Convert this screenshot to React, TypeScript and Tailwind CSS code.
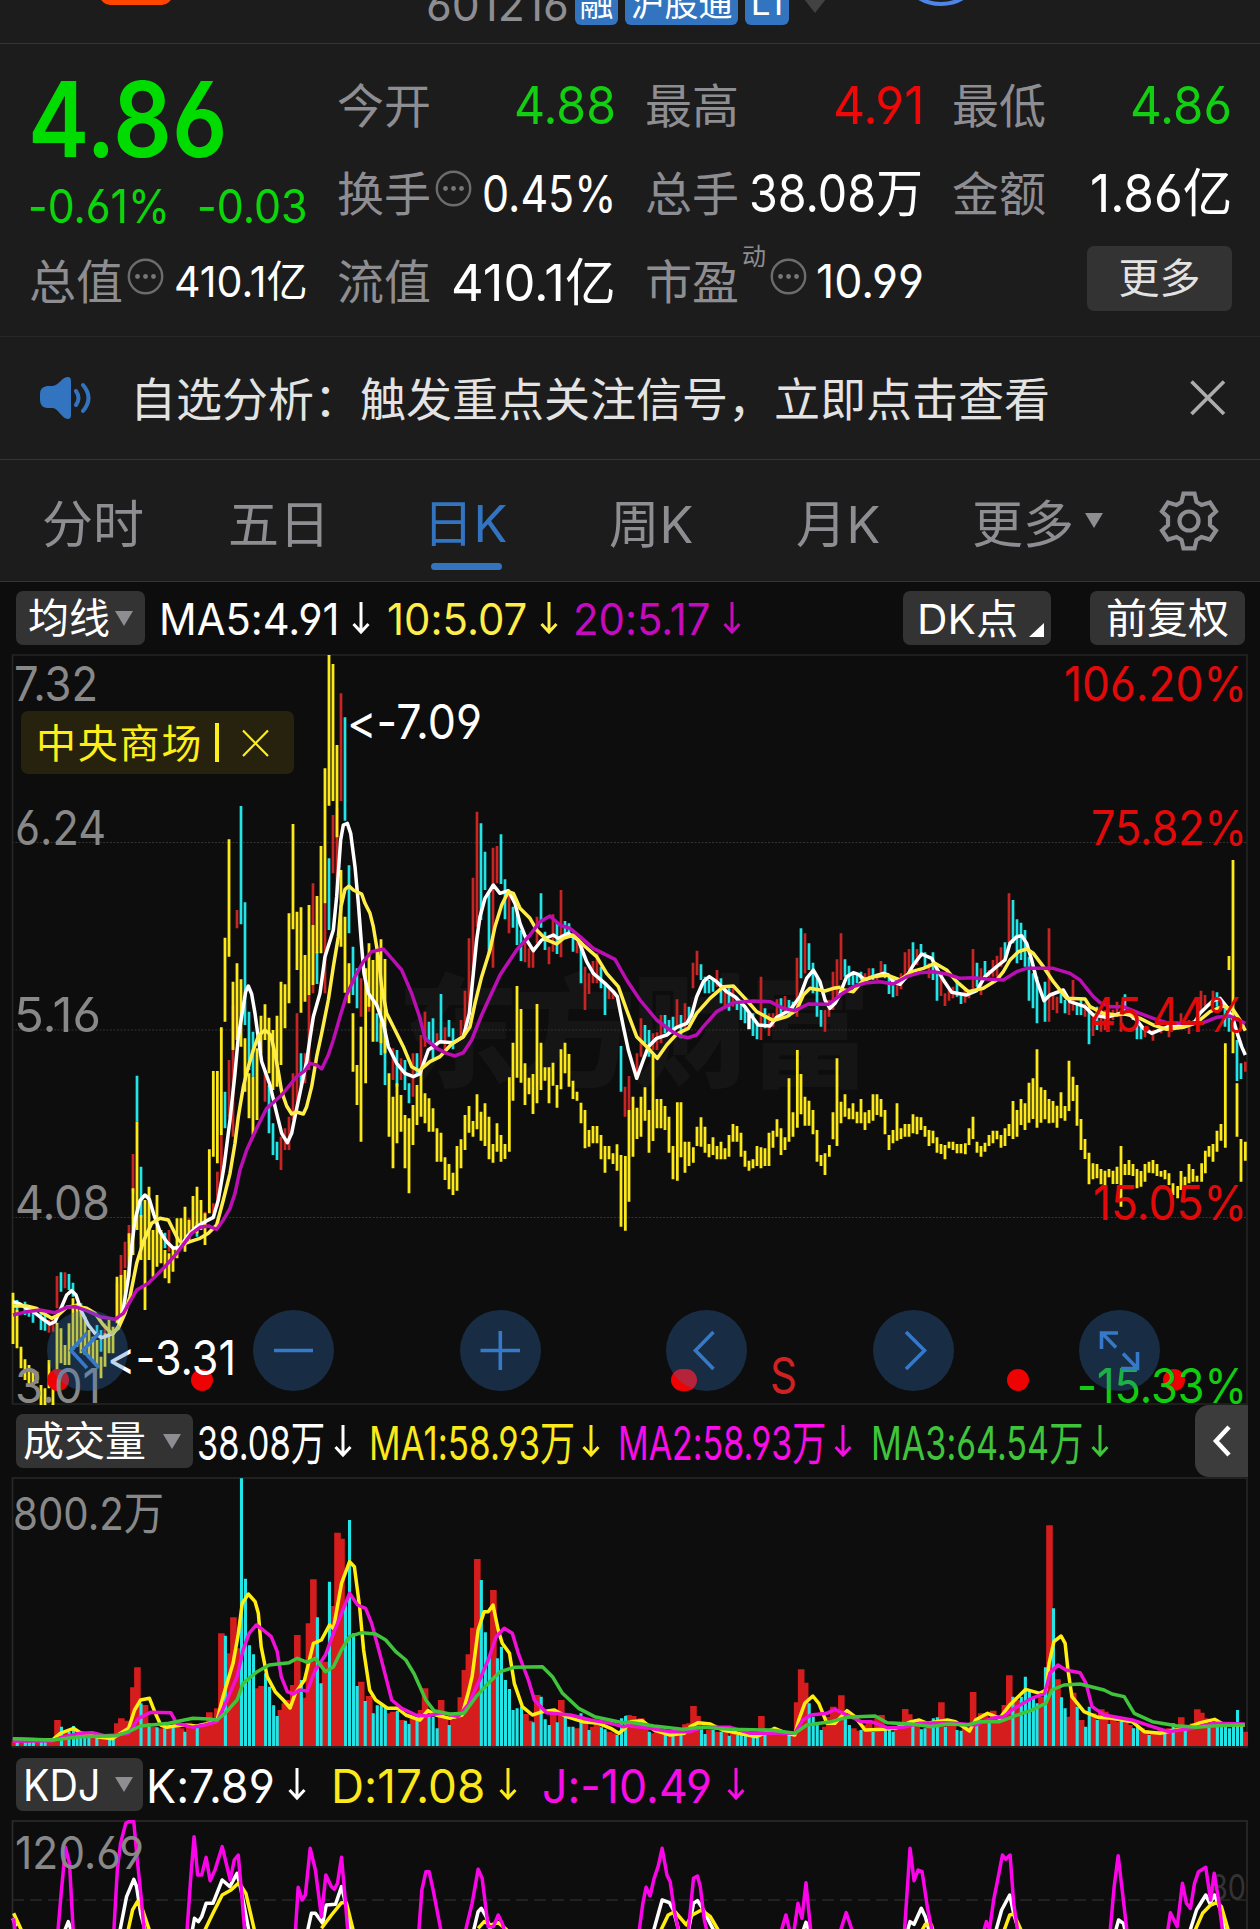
import { ReactNode, useLayoutEffect, useRef, useState } from "react";

const FONT = "font-['Inter','Noto_Sans_CJK_SC',sans-serif] [font-feature-settings:'cv03','cv04','calt'_0]";

/** Text squeezed or stretched horizontally to an exact width. */
function Fit({ w, className = "", children }: { w: number; className?: string; children: ReactNode }) {
  const ref = useRef<HTMLSpanElement>(null);
  const [k, setK] = useState(1);
  useLayoutEffect(() => {
    if (ref.current) setK(w / ref.current.offsetWidth);
  }, [w]);
  return (
    <span className={"inline-flex shrink-0 leading-none " + className} style={{ width: w }}>
      <span ref={ref} className="inline-block shrink-0 origin-left whitespace-nowrap" style={{ transform: `translateY(0.03em) scaleX(${k})` }}>
        {children}
      </span>
    </span>
  );
}

const Dots = () => (
  <svg className="shrink-0" width="37" height="37" viewBox="0 0 37 37">
    <circle cx="18.5" cy="18.5" r="16.7" fill="none" stroke="#6c6c6c" strokeWidth="2.4" />
    <g fill="#77777a">
      <circle cx="10.5" cy="18.5" r="2.4" />
      <circle cx="18.5" cy="18.5" r="2.4" />
      <circle cx="26.5" cy="18.5" r="2.4" />
    </g>
  </svg>
);

const Down = ({ className = "" }: { className?: string }) => (
  <svg className={"shrink-0 " + className} width="18" height="34" viewBox="0 0 18 34" fill="none" stroke="currentColor" strokeWidth="3">
    <path d="M9 1V30M1.5 23L9 31L16.5 23" />
  </svg>
);

const Tri = ({ className = "" }: { className?: string }) => (
  <svg className={"shrink-0 " + className} width="18" height="15" viewBox="0 0 18 15">
    <path d="M0 0H18L9 15Z" fill="#8e8d92" />
  </svg>
);

type Mark = string;
/** "x:top-bottom" entries to vertical strokes. */
const bars = (s: Mark) =>
  s
    .split(",")
    .map((b) => {
      const m = b.match(/^(-?\d+):(-?\d+)-(-?\d+)$/);
      return m ? `M${m[1]} ${m[2]}V${m[3]}` : "";
    })
    .join("");
/** "x:top" entries to columns standing on the volume baseline. */
const cols = (s: string) =>
  s
    .split(",")
    .map((b) => {
      const [x, t] = b.split(":");
      return `M${x} ${t}V828`;
    })
    .join("");
const line = (s: string) =>
  s
    .split("M")
    .filter((p) => p.trim())
    .map((p) => "M" + p.trim().replace(/ /g, "L"))
    .join("");

const RED = "#c92424";
const CYAN = "#22e5e8";
const YEL = "#fbe91c";

const P = [
  {
    t: "translate(0 640) scale(.33333)",
    y: "664:1162-1485,675:893-1145,687:598-950,699:1025-1230,711:970-1200,723:1018-1220,735:1195-1355,747:1300-1435,759:1310-1485,771:1225-1440,783:1127-1240,795:1093-1200,807:1133-1300,819:1170-1350,831:1127-1340,843:1025-1275,855:1033-1165,867:820-1090,879:552-868,891:815-990,903:802-1118,915:945-1085,927:795-1065,939:855-1035,951:768-940,963:618-940,975:385-790,987:45-497,999:72-483,1011:315-592,1023:690-920,1035:830-1058,1047:970-1090,1059:1120-1295,1071:1275-1395,1083:1160-1505,1097:985-1330,1107:910-1100,1119:960-1205,1131:925-1100,1143:898-1210,1155:957-1240,1167:1300-1490,1179:1370-1585,1191:1330-1510,1203:1365-1475,1215:1425-1585,1227:1435-1660,1239:1395-1515,1251:1335-1455",
    r: "699:1095-1490,711:810-865,687:1260-1430,664:1485-1610,652:1595-1700,640:1690-1720,795:1290-1385,843:1490-1590,855:1465-1530,867:1430-1530,879:1300-1440,891:1120-1400,915:1240-1330,927:1065-1290,939:730-1060,975:790-1060,999:525-700,1011:505-760,1023:160-483,1083:1015-1130,1107:1060-1115,1179:1225-1320,1203:1255-1320,1239:1240-1370",
    c: "723:498-853,735:787-1155,747:1115-1290,759:1175-1310,675:1355-1465,807:1335-1480,819:1450-1545,831:1505-1560,903:1240-1340,951:935-1032,987:655-870,1035:232-542,1047:676-880,1059:920-1065,1071:985-1105,1131:1120-1205,1143:1150-1245,1155:1165-1335,1191:1230-1340,1215:1260-1350,1227:1330-1390,1251:1240-1300",
    a: "733,1080 737,1055 745,1038 755,1062 765,1120 773,1180 785,1265 810,1335 830,1420 845,1480 862,1508 875,1480 885,1430 905,1335 920,1265 930,1195 940,1130 960,1060 975,950 1000,870 1010,770 1022,600 1030,555 1042,550 1052,580 1065,680 1075,790 1085,920 1092,1000 1105,1060 1130,1095 1150,1150 1165,1220 1190,1270 1215,1300 1240,1310 1262,1300",
    b: "985,1080 1000,980 1015,890 1023,800 1035,748 1047,738 1060,750 1085,762 1095,790 1110,820 1120,860 1135,950 1145,1040 1160,1120 1185,1170 1210,1220 1235,1280 1262,1295",
    d: "1000,1200 1020,1130 1040,1065 1065,1010 1090,965 1115,935 1150,927 1175,955 1205,990 1235,1060 1262,1140",
  },
  {
    t: "translate(0 1000) scale(.33333)",
    y: "39:878-1032,51:930-1045,63:1040-1105,75:1078-1140,87:1095-1155,99:1110-1160,111:1115-1150,123:1155-1215,135:1165-1215,147:1080-1165,159:1165-1215,171:968-1135,183:985-1090,195:1035-1095,207:970-1095,219:895-1050,231:910-1040,243:930-1060,255:950-1065,267:990-1075,279:1010-1085,291:1020-1100,303:1070-1135,315:1000-1100,327:960-1060,339:980-1060,351:830-970,363:825-950,375:810-905,387:700-830,399:565-765,411:365-690,423:645-780,435:600-930,447:560-780,459:690-830,471:585-800,483:690-790,495:750-835,507:760-850,519:740-815,531:655-775,543:655-735,555:620-755,567:660-720,579:588-690,591:560-700,603:600-690,615:640-735,628:448-640,640:213-470,652:213-490",
    r: "171:828-925,195:817-865,147:960-998,159:960-995,351:850-960,363:765-830,375:725-805,387:675-730,399:462-580,507:690-755,567:655-700,615:635-680,315:970-1010",
    c: "183:817-875,207:822-870,219:848-890,51:900-935,75:905-945,87:915-950,99:930-968,123:935-990,135:945-992,291:975-1010,303:990-1055,411:227-365,423:500-650,495:698-745,591:665-710,243:910-950",
    a: "39,905 60,912 80,925 100,935 130,958 150,972 165,965 183,925 200,885 215,872 228,885 245,935 265,975 285,1000 305,1013 320,1008 340,1000 355,980 370,925 385,835 395,740 405,660 420,602 435,585 448,598 462,645 480,695 500,725 520,745 540,742 565,705 590,680 615,665 640,652 655,600 672,500 690,360 705,220 715,110 733,0",
    b: "39,918 80,918 110,925 130,940 155,955 175,945 200,922 225,918 260,925 285,940 310,975 335,1000 355,985 375,940 390,890 410,790 430,725 455,670 480,655 505,660 520,690 535,720 550,732 570,725 600,715 625,700 650,675 670,600 690,520 705,430 715,350 730,260 745,200 760,150 775,108 795,90 812,105 825,160 835,215 845,275 860,318 875,342 890,336 910,342 920,320 935,260 950,170 965,100 985,0",
    d: "39,945 80,935 120,930 165,938 200,922 225,920 260,932 300,950 345,958 370,940 390,905 410,870 445,850 490,805 530,760 575,700 600,682 625,678 650,688 670,660 690,625 705,580 720,510 740,450 770,385 800,325 845,285 890,230 915,212 930,190 950,195 965,207 985,165 1000,120",
  },
  {
    t: "translate(420 780) scale(.33333)",
    y: "3:870-1010,15:940-1030,27:955-1055,39:985-1055,51:1045-1145,63:1058-1145,75:1132-1200,87:1152-1228,99:1178-1245,111:1098-1232,123:1078-1165,135:1005-1110,147:978-1058,159:1023-1070,171:943-1048,183:995-1082,195:970-1098,207:1010-1138,219:1092-1148,231:1030-1115,243:1065-1145,255:1092-1137,268:892-1115,279:788-962,291:618-893,303:687-908,315:850-975,327:893-943,339:882-1002,351:672-970,363:788-930,375:862-902,387:862-970,399:848-917,411:915-983,423:808-928,435:788-880,447:822-920,459:902-957,471:935-962,483:968-1030,495:990-1105,507:1050-1100,519:1038-1090,531:1038-1090,543:1065-1138,555:1098-1178,567:1098-1138,579:1120-1152,591:1093-1172,603:1125-1340,616:1128-1352,627:990-1265,639:950-1130,651:983-1077,663:950-1070,675:922-1022,687:990-1118,699:825-1083,711:957-1045,723:957-1045,735:978-1050,747:1010-1118,759:1098-1198,772:967-1202,783:967-1132,795:1085-1178,807:1085-1158,820:1102-1148,831:1040-1098,843:1012-1100,855:1040-1118,867:1092-1132,879:1072-1125,891:1098-1138,903:1085-1138,915:1105-1138,927:1065-1130,939:1032-1085,951:1038-1085,963:1058-1130,975:1112-1160,987:1142-1172,999:1138-1165,1011:1098-1158,1023:1102-1165,1035:1105-1158,1047:1058-1158,1059:1052-1103,1071:1018-1070,1083:1045-1125,1095:1072-1110,1107:895-1085,1119:997-1070,1132:810-1043,1143:882-1003,1155:950-1037,1167:962-1037,1179:990-1063,1191:1050-1145,1203:1125-1158,1215:1120-1185,1228:1095-1130,1239:997-1078,1251:835-1098",
    r: "3:765-880,15:695-800,51:760-800,75:742-815,123:720-770,135:632-740,147:475-720,159:293-580,171:95-440,219:203-563,231:198-310,267:340-460,315:490-547,327:505-563,339:510-563,351:410-490,387:500-553,399:403-515,423:330-532,471:475-520,495:560-690,507:580-642,519:543-610,531:520-610,567:620-657,579:630-657,615:920-1010,627:888-990,651:820-890,663:715-830,699:760-810,711:757-810,723:705-790,771:658-740,795:670-745,819:548-625,831:512-585,891:570-620,915:620-680,939:615-680,1023:590-780,1047:700-768,1059:700-740,1071:658-720,1095:648-700,1131:533-710,1155:460-580,1215:690-755,1227:660-710,1239:575-690,1251:538-650",
    c: "27:725-790,39:715-840,63:642-785,87:720-770,99:745-808,183:130-420,195:215-330,207:340-520,243:163-312,255:298-418,279:380-443,291:400-495,303:450-543,363:340-443,375:455-510,411:425-522,435:423-470,447:430-470,459:470-515,483:490-610,543:560-625,555:610-705,603:798-935,675:735-790,687:750-830,735:705-760,747:720-760,759:710-760,783:705-775,807:680-730,843:553-600,855:590-640,867:600-640,879:600-635,903:595-670,927:625-692,951:650-690,963:660-720,975:680-730,999:700-768,1011:730-778,1035:685-745,1083:655-700,1107:660-712,1119:665-690,1143:445-595,1167:490-570,1179:548-640,1191:590-710,1203:690-740",
    a: "0,880 25,810 60,785 100,788 130,770 148,700 160,580 170,480 180,410 195,355 220,315 240,340 265,332 285,370 300,430 320,480 340,512 365,480 400,465 415,475 445,460 475,480 500,545 520,580 555,610 580,635 592,650 610,740 625,810 650,895 670,840 685,800 710,775 740,765 770,742 800,730 815,705 830,650 850,605 868,590 890,605 920,635 945,650 975,680 1000,715 1015,735 1050,738 1070,712 1110,690 1140,650 1160,595 1180,570 1200,605 1215,660 1230,685 1245,670 1262,640M987,700 987,748",
    b: "0,870 30,845 60,830 95,792 130,770 150,740 165,670 185,590 210,510 225,440 245,375 265,335 280,340 300,385 330,415 350,450 380,480 410,492 430,475 460,465 490,495 530,530 560,580 595,620 620,690 650,770 685,805 712,835 740,795 770,762 805,745 830,700 870,655 910,620 940,618 975,655 1010,695 1060,722 1100,710 1130,690 1150,645 1170,625 1200,630 1215,633 1240,625 1262,622",
    d: "0,715 15,775 50,805 80,820 105,828 130,818 155,780 185,705 210,650 240,585 290,510 330,465 360,425 390,408 420,435 450,445 480,470 520,505 585,538 620,600 660,660 710,720 750,750 780,768 805,773 830,765 850,740 890,695 940,668 1000,663 1050,665 1090,685 1125,692 1165,672 1225,673 1262,645",
  },
  {
    t: "translate(840 780) scale(.33333)",
    y: "3:965-1030,15:943-1010,27:985-1018,39:970-1018,51:995-1030,63:957-1030,75:997-1050,87:990-1030,99:943-1022,111:943-1005,123:957-1010,135:990-1063,147:1065-1110,159:1050-1090,171:970-1082,183:1045-1077,195:1032-1070,207:1032-1070,219:1003-1060,231:1010-1063,243:1012-1050,255:1038-1070,267:1050-1098,279:1052-1090,291:1072-1118,303:1092-1122,315:1095-1138,327:1085-1105,339:1085-1110,351:1092-1120,363:1092-1120,376:1090-1123,387:1045-1095,399:1010-1077,411:1085-1118,423:1098-1130,435:1088-1115,447:1065-1098,459:1052-1090,471:1052-1078,483:1065-1103,495:1045-1098,507:1032-1068,519:963-1077,531:990-1070,543:957-1035,555:970-1050,567:908-1028,579:895-1017,591:808-1043,603:922-1028,615:930-1018,627:957-1030,639:963-1028,651:977-1043,663:937-1015,675:978-1022,687:842-993,699:890-963,711:915-1037,723:1017-1110,735:1077-1137,747:1118-1213,759:1150-1198,771:1152-1195,783:1167-1213,795:1172-1215,807:1167-1192,819:1172-1212,831:1160-1212,843:1098-1280,855:1152-1185,867:1140-1185,879:1152-1188,891:1167-1225,903:1173-1220,915:1152-1205,927:1145-1178,939:1140-1180,951:1152-1188,963:1173-1190,975:1170-1198,987:1180-1215,999:1210-1245,1013:1218-1255,1023:1173-1230,1035:1190-1218,1047:1152-1210,1059:1167-1205,1071:1187-1205,1085:1150-1205,1096:1112-1180,1107:1098-1130,1119:1092-1145,1131:1052-1115,1143:1032-1082,1156:790-1103,1167:528-570,1179:240-820,1191:910-1070,1203:1077-1205,1216:1085-1142",
    r: "3:460-600,75:580-610,87:565-600,111:580-600,123:543-590,171:600-648,183:580-628,195:517-590,207:507-570,231:507-555,267:550-595,303:580-648,315:640-678,327:630-662,339:620-655,375:630-668,387:640-655,399:507-635,423:565-645,447:570-590,459:540-590,471:527-590,483:502-560,507:340-490,627:445-725,639:640-690,651:650-700,687:660-705,699:600-692,735:670-710,759:700-768,783:690-755,795:690-750,819:690-720,831:665-710,843:690-755,867:690-710,915:740-772,939:750-782,963:740-760,987:735-772,1023:700-745,1047:720-762,1083:632-690,1095:645-680,1119:632-660,1216:845-875",
    c: "15:538-590,27:557-615,39:575-615,51:580-610,63:575-600,99:565-600,135:553-595,147:590-642,159:600-652,219:487-560,243:492-530,255:517-560,279:517-600,291:560-662,351:600-650,363:640-672,411:548-620,435:543-600,495:487-540,519:360-490,531:418-550,543:428-540,555:450-560,567:530-662,579:580-685,591:590-730,615:605-725,663:640-670,675:660-700,711:670-705,723:660-705,747:680-793,771:680-750,855:643-700,879:700-720,891:720-778,903:740-778,1131:637-680,1155:680-740,1167:690-755,1191:780-903,1203:850-897",
    a: "0,640 20,590 40,578 55,583 75,600 100,590 130,580 145,585 160,605 180,613 200,590 220,555 245,522 275,535 290,565 310,600 335,637 380,645 410,632 435,590 470,560 495,540 510,490 530,470 545,467 560,490 575,540 590,600 612,662 630,645 670,630 690,665 735,680 760,705 800,712 840,700 870,705 890,720 910,745 935,760 960,750 985,740 1040,735 1065,725 1080,700 1100,680 1120,662 1140,655 1160,680 1180,720 1195,770 1205,800 1216,825",
    b: "0,628 40,635 70,600 100,590 140,585 180,600 215,575 250,565 285,550 320,570 350,605 385,635 430,625 470,600 490,575 510,540 535,515 560,507 580,520 610,560 640,605 680,655 735,657 750,680 790,700 830,705 860,700 900,715 940,735 980,748 1030,742 1070,728 1110,695 1150,678 1180,690 1200,720 1216,752",
    d: "0,645 40,620 80,608 120,605 160,612 200,590 240,578 280,575 320,582 360,595 400,593 440,597 490,600 530,575 560,565 640,565 690,580 720,600 740,625 760,650 780,668 810,680 850,680 900,700 940,715 980,728 1030,730 1090,728 1130,712 1170,708 1216,730",
  },
];

const V = [
  {
    t: "translate(0 1470) scale(.40179 .33333)",
    r: "37:814,47:814,57:814,67:814,77:814,93:814,121:812,131:808,143:750,163:790,231:800,251:803,263:803,292:760,302:745,312:752,322:752,332:652,342:592,361:705,381:770,400:775,420:765,441:770,451:775,471:758,481:765,501:768,511:760,521:727,531:745,541:715,551:490,571:550,581:442,591:535,641:655,651:648,699:720,709:700,719:690,730:645,740:495,759:683,769:460,780:328,809:575,830:408,840:188,850:206,899:635,919:678,970:730,979:725,999:750,1028:745,1048:720,1058:655,1098:690,1108:740,1128:750,1138:745,1147:682,1157:600,1167:553,1178:473,1188:267,1228:360,1308:732,1318:752,1337:675,1377:730,1397:690,1436:775,1456:755,1476:770,1486:760,1516:785,1526:790,1564:735",
    c: "43:815,63:815,73:815,83:815,103:815,112:815,153:770,172:785,183:768,192:790,201:795,211:795,221:798,241:800,273:806,282:806,351:700,371:760,391:772,410:775,431:772,460:785,491:770,561:497,601:25,611:326,621:526,631:553,661:610,671:650,681:706,690:738,750:630,790:442,799:640,820:335,860:400,870:150,880:490,889:648,909:693,929:730,939:706,949:706,959:710,989:722,1009:752,1018:762,1038:750,1068:735,1078:740,1088:775,1118:765,1198:330,1208:487,1218:565,1238:565,1248:530,1258:630,1268:657,1277:720,1287:715,1298:710,1327:757,1347:680,1357:748,1367:765,1387:757,1407:740,1416:770,1426:770,1446:730,1466:780,1497:772,1506:778,1536:795,1547:745,1557:738",
    y: "32,808 130,810 150,790 183,775 200,788 240,800 280,806 300,790 320,775 335,720 350,690 372,685 385,725 400,765 415,772 450,765 490,768 520,760 540,752 555,680 580,580 592,500 603,400 618,372 635,395 643,430 650,530 665,620 685,665 705,690 722,714 735,670 758,630 768,580 780,520 800,510 820,465 830,475 850,340 870,275 882,290 895,410 905,540 920,660 935,690 965,715 990,715 1010,735 1045,750 1065,722 1085,735 1120,745 1150,735 1165,670 1175,620 1190,480 1205,425 1215,425 1227,405 1240,480 1250,520 1268,550 1280,640 1300,710 1325,735 1350,725 1380,720 1410,740 1450,755 1490,760 1520,775 1540,790 1555,775 1568,755",
    m: "32,814 130,812 160,800 200,790 230,788 260,797 290,795 320,790 345,745 375,727 425,728 440,760 480,772 510,765 540,755 565,690 590,620 605,540 620,490 638,465 655,480 675,500 690,545 700,620 715,665 730,672 745,660 765,663 785,600 810,555 830,490 850,430 870,370 890,405 910,415 925,460 945,550 960,620 975,690 1000,715 1035,735 1060,738 1100,728 1140,740 1165,705 1190,640 1215,570 1235,500 1255,475 1275,490 1290,550 1315,630 1330,690 1360,728 1420,735 1470,750 1520,760 1550,770 1568,766",
    g: "32,806 130,810 200,800 290,797 320,785 350,768 420,760 480,745 520,747 540,750 560,730 590,690 605,640 640,605 670,585 720,578 740,565 765,577 785,565 810,605 830,590 850,540 870,500 900,488 935,492 960,510 985,545 1010,570 1030,610 1060,690 1080,722 1120,732 1155,730 1185,680 1215,640 1245,605 1280,592 1350,590 1375,620 1400,670 1440,715 1480,740 1550,758 1568,756",
    kj: "34,1345 38,1390M143,1400 153,1260 163,1132 173,1180 183,1400M283,1390 292,1200 300,1120 313,1060 320,1055 333,1055 340,1150 352,1290 360,1400M465,1390 475,1220 483,1100 492,1215 502,1215 513,1162 523,1232 535,1200 553,1130 573,1230 583,1170 593,1155 600,1250 610,1400M735,1390 742,1252 752,1290 760,1275 772,1135 785,1200 800,1340 811,1215 825,1250 832,1258 840,1240 850,1162 858,1270 866,1390M1042,1390 1050,1260 1060,1205 1068,1205 1078,1260 1098,1385M1158,1385 1175,1300 1190,1198 1200,1225 1215,1370 1228,1370 1240,1335 1250,1360 1255,1380",
    kk: "32,1345 40,1370M160,1385 170,1355 178,1385M298,1385 315,1280 333,1228 340,1250 350,1330 362,1385M478,1385 484,1345 494,1355 502,1340 513,1300 530,1300 553,1230 572,1250 590,1210 600,1260 620,1385M765,1385 775,1330 785,1330 803,1360 812,1305 835,1303 850,1250 862,1310 875,1385M1178,1385 1190,1325 1198,1315 1210,1340 1222,1385",
    kd: "34,1330 55,1385M318,1385 330,1320 342,1295 355,1320 373,1385M508,1385 530,1330 553,1275 575,1260 595,1238 612,1270 635,1390M800,1375 825,1335 850,1298 862,1298 880,1385M1190,1375 1205,1355 1222,1365 1240,1358 1262,1380",
  },
  {
    t: "translate(630 1470) scale(.40179 .33333)",
    r: "8:738,18:748,28:745,38:770,58:790,68:780,78:790,98:790,117:785,138:763,148:760,158:708,168:738,197:780,217:785,237:785,257:790,297:795,327:738,347:790,357:785,367:785,377:790,387:790,406:790,416:697,426:598,436:638,486:770,496:740,506:710,516:725,526:676,556:775,566:782,585:765,595:755,616:745,626:735,665:770,675:760,685:717,695:733,714:765,745:765,775:697,795:750,804:765,834:775,844:770,854:666,874:730,884:735,904:722,914:735,924:735,933:705,944:616,964:690,1024:680,1044:166,1064:628,1093:740,1103:668,1123:750,1153:730,1173:718,1183:725,1202:750,1213:755,1233:755,1243:765,1273:775,1283:780,1302:785,1312:785,1321:780,1342:775,1362:770,1372:742,1392:775,1402:760,1412:718,1422:728,1432:745,1452:755,1530:785",
    c: "48:785,88:790,107:795,127:790,178:778,187:792,207:780,227:785,247:797,268:795,277:795,287:795,307:800,317:803,336:795,396:795,446:700,456:740,466:765,476:780,536:745,546:765,575:780,605:785,636:775,646:778,655:785,704:755,725:778,734:775,755:745,765:742,785:770,814:780,824:782,863:750,894:755,953:680,974:680,984:620,994:665,1004:680,1013:700,1034:592,1054:415,1074:682,1083:715,1113:710,1134:770,1143:710,1163:750,1192:762,1223:745,1253:775,1263:770,1292:795,1331:785,1352:760,1382:780,1441:770,1462:760,1472:760,1482:765,1492:775,1502:765,1512:720,1522:770",
    y: "0,755 30,752 60,780 100,795 135,790 150,770 170,758 200,762 230,780 270,790 315,800 360,775 390,790 410,795 420,750 435,700 455,678 470,700 490,760 510,760 540,722 560,740 585,780 630,778 660,775 700,755 720,750 740,760 790,750 810,755 845,783 860,750 890,730 920,745 945,705 985,658 1020,670 1035,660 1043,580 1055,515 1073,498 1083,520 1090,600 1100,680 1130,725 1165,742 1200,745 1250,755 1280,785 1320,790 1380,775 1420,758 1455,748 1480,765 1530,765",
    m: "0,768 50,775 100,785 150,785 180,772 250,772 300,790 350,790 410,790 430,750 450,735 490,730 510,718 540,735 575,755 600,755 640,773 680,772 720,760 790,758 860,765 900,745 930,740 950,720 1000,685 1032,670 1045,610 1065,585 1085,600 1120,608 1135,640 1150,710 1180,735 1250,750 1300,770 1340,785 1400,775 1450,760 1530,762",
    g: "0,757 60,768 130,778 180,772 250,778 350,780 410,790 440,765 500,755 540,742 610,738 640,758 700,762 750,770 790,762 840,765 870,755 920,755 960,737 1000,720 1035,700 1050,660 1080,645 1120,642 1180,660 1200,672 1230,680 1255,730 1300,755 1360,767 1410,772 1450,768 1530,764",
    kj: "22,1390 32,1300 40,1252 50,1278 60,1225 70,1190 80,1135 92,1215 100,1235 110,1320 122,1390M145,1385 158,1225 168,1218 175,1250 185,1350 192,1385M376,1385 388,1335 398,1385M408,1385 418,1300 428,1345 438,1238 450,1385M523,1385 538,1328 554,1385M683,1385 697,1135 707,1232 717,1200 727,1205 740,1310 752,1385M880,1385 887,1355 895,1378 905,1290 915,1230 927,1155 935,1168 946,1155 955,1300 965,1385M1195,1385 1205,1250 1215,1157 1225,1260 1237,1385M1338,1385 1345,1328 1362,1370 1375,1240 1385,1300 1395,1315 1405,1240 1415,1205 1433,1192 1445,1290 1454,1210 1465,1290 1475,1385",
    kk: "58,1385 80,1290 98,1298 108,1320 122,1385M145,1385 158,1300 168,1292 178,1310 195,1350 210,1385M430,1385 438,1357 446,1385M690,1385 697,1355 707,1363 725,1315 735,1340 745,1385M910,1385 925,1320 945,1275 955,1330 968,1385M1208,1385 1216,1350 1228,1360 1233,1385M1393,1385 1410,1320 1433,1275 1443,1300 1455,1275 1470,1320 1480,1385",
    kd: "75,1385 95,1335 112,1325 140,1365 155,1335 178,1320 200,1340 222,1385M725,1385 735,1363 750,1365 755,1385M930,1385 945,1335 955,1332 975,1385M1405,1385 1425,1330 1445,1305 1460,1298 1472,1310 1490,1385",
  },
];

function Stroke({ d, c, w = 3.5 }: { d: string; c: string; w?: number }) {
  return <path d={d} stroke={c} strokeWidth={w} fill="none" vectorEffect="non-scaling-stroke" strokeLinejoin="round" />;
}

/** Label placed by its left end and baseline, with a set width. */
function Label({ x, y, w, s = 48, c = "#888", children }: { x: number; y: number; w: number; s?: number; c?: string; children: string }) {
  return (
    <text x={x} y={y} fontSize={s} fill={c} textLength={w} lengthAdjust="spacingAndGlyphs">
      {children}
    </text>
  );
}

function PriceChart() {
  const circle = (cx: number) => <circle key={cx} cx={cx} cy="1350.5" r="40.5" fill="#3274c0" fillOpacity=".3" />;
  return (
    <svg className="block" width="1260" height="751" viewBox="0 654 1260 751">
      <text x="397" y="1077" fontSize="122" fontWeight="900" fill="#151515" textLength="474">
        东方财富
      </text>
      <g stroke="#2b2b2b" fill="none">
        <path d="M12 842.5H1247M12 1030H1247M12 1217.5H1247" stroke="#333" strokeWidth="1" strokeDasharray="2 1.5" />
        <path d="M12.5 655H1247V1404H12.5Z" stroke="#252525" strokeWidth="1.6" />
      </g>
      {P.map((p) => (
        <g key={p.t} transform={p.t}>
          <Stroke d={bars(p.r)} c={RED} w={2.7} />
          <Stroke d={bars(p.c)} c={CYAN} w={2.7} />
          <Stroke d={bars(p.y)} c={YEL} w={2.8} />
        </g>
      ))}
      {P.map((p) => (
        <g key={p.t} transform={p.t}>
          <Stroke d={line(p.a)} c="#fff" />
          <Stroke d={line(p.b)} c="#ffee4a" />
          <Stroke d={line(p.d)} c="#bb0fb4" />
        </g>
      ))}
      <g fill="#ee0202">
        <circle cx="58" cy="1380" r="11" />
        <circle cx="202" cy="1380" r="11" />
        <circle cx="682" cy="1380" r="11" />
        <circle cx="686" cy="1380" r="11" />
        <circle cx="1018" cy="1380" r="11" />
        <circle cx="1174" cy="1380" r="11" />
      </g>
      <Label x={14} y={701} w={84}>7.32</Label>
      <Label x={15} y={844.5} w={91}>6.24</Label>
      <Label x={14} y={1031.5} w={87}>5.16</Label>
      <Label x={15} y={1219.5} w={95}>4.08</Label>
      <Label x={15} y={1402.5} w={86}>3.01</Label>
      <Label x={1064} y={701} w={183} c="#e00a0a">106.20%</Label>
      <Label x={1091} y={844.5} w={156} c="#e00a0a">75.82%</Label>
      <Label x={1089} y={1031.5} w={158} c="#e00a0a">45.44%</Label>
      <Label x={1093} y={1219.5} w={154} c="#e00a0a">15.05%</Label>
      <Label x={1077} y={1403} w={170} c="#12cc12">-15.33%</Label>
      <Label x={347} y={739} w={135} c="#fff">{"<-7.09"}</Label>
      <Label x={107} y={1374.5} w={129} c="#fff">{"<-3.31"}</Label>
      <Label x={770} y={1393} w={27} s={49} c="#cf2222">S</Label>
      <rect x="21" y="711" width="273" height="63" rx="7" fill="#26220d" />
      <text x="36" y="758" fontSize="40" letterSpacing="1.8" fill="#ffee18">
        中央商场
      </text>
      <path d="M217 723V762" stroke="#ffee18" strokeWidth="4" />
      <path d="M243 730.5L268 756M268 730.5L243 756" stroke="#ffee18" strokeWidth="2.2" />
      {[87.5, 293.5, 500.5, 706.5, 913.5, 1119.5].map(circle)}
      <g fill="none" stroke="#3579c8" strokeWidth="3.6">
        <path d="M87 1333L71 1350.5L87 1368M99 1333L83 1350.5L99 1368" />
        <path d="M274 1350.5H313M480.5 1350.5H520M500.3 1331V1370" />
        <path d="M713.5 1332L695.5 1350.5L713.5 1369M906 1332L924.5 1350.5L906 1369" />
        <path d="M1101.5 1349V1333H1118M1102 1333L1116 1347.5M1137.5 1352V1368.5H1121M1137 1368L1123 1353.5" />
      </g>
    </svg>
  );
}

function VolumeChart() {
  return (
    <svg className="block" width="1260" height="271" viewBox="0 1477 1260 271">
      <path d="M12.5 1478H1247V1747H12.5Z" stroke="#282828" strokeWidth="1.6" fill="none" />
      <Label x={13} y={1530} w={151} s={45}>800.2万</Label>
      {V.map((v) => (
        <g key={v.t} transform={v.t}>
          <Stroke d={cols(v.r)} c="#d41d1c" w={6.6} />
          <Stroke d={cols(v.c)} c={CYAN} w={3.1} />
        </g>
      ))}
      {V.map((v) => (
        <g key={v.t} transform={v.t}>
          <Stroke d={line(v.y)} c="#ffee10" />
          <Stroke d={line(v.m)} c="#f010d8" />
          <Stroke d={line(v.g)} c="#3fc43c" />
        </g>
      ))}
    </svg>
  );
}

function KdjChart() {
  return (
    <svg className="block" width="1260" height="109" viewBox="0 1820 1260 109">
      <path d="M12.5 1940V1821H1247V1940" stroke="#2c2c2c" strokeWidth="1.6" fill="none" />
      <path d="M12 1900H1247" stroke="#292929" strokeWidth="1.5" strokeDasharray="12 6" />
      <Label x={1210} y={1900} w={36} s={35} c="#333">80</Label>
      {V.map((v) => (
        <g key={v.t} transform={v.t}>
          <Stroke d={line(v.kk)} c="#fff" />
          <Stroke d={line(v.kd)} c="#ffee10" />
          <Stroke d={line(v.kj)} c="#fb04e9" />
        </g>
      ))}
      <Label x={15} y={1869} w={129} s={45}>120.69</Label>
    </svg>
  );
}

const Chip = ({ className, children }: { className: string; children: ReactNode }) => (
  <div className={"flex shrink-0 items-center rounded-[7px] bg-[#333] text-[41px] leading-none " + className}>{children}</div>
);

export default function App() {
  return (
    <div className={"h-[1929px] w-[1260px] overflow-hidden bg-[#0d0d0d] text-white " + FONT}>
      <header className="flex h-[44px] items-start overflow-hidden border-b border-[#343434] bg-[#1c1c1c]">
        <div className="-mt-[20px] ml-[100px] h-[25px] w-[72px] rounded-b-[10px] bg-[#ff4500]" />
        <Fit w={143} className="-mt-[19px] ml-[254px] text-[45px] text-[#8e8d92]">601216</Fit>
        <div className="-mt-[20px] ml-[6px] flex h-[45px] w-[43px] items-center justify-center rounded-[6px] bg-[#3274c0] pt-[2px] text-[34px] leading-none">融</div>
        <div className="-mt-[20px] ml-[7px] flex h-[45px] w-[113px] items-center justify-center rounded-[6px] bg-[#3274c0] pt-[2px] text-[34px] leading-none">沪股通</div>
        <div className="-mt-[20px] ml-[7px] flex h-[45px] w-[44px] items-center justify-center rounded-[6px] bg-[#3274c0] text-[35px] leading-none">L1</div>
        <svg className="ml-[15px]" width="22" height="13" viewBox="0 0 22 13"><path d="M0 -1H22L11 13Z" fill="#424242" /></svg>
        <div className="-mt-[84px] ml-[70px] size-[90px] shrink-0 rounded-full border-4 border-[#4d86e8]" />
      </header>

      <section className="grid h-[293px] grid-cols-[275px_275px_274px_276px] grid-rows-[88px_88px_88px] gap-x-[33px] border-b border-[#272727] bg-[#1c1c1c] pl-[31px] pt-[16px] text-[47px] text-[#8e8d92]">
        <div className="row-span-2 flex flex-col text-[#0bd60b]">
          <Fit w={200} className="-ml-[3px] mt-[4px] text-[104px] font-semibold text-[#00dc00]">4.86</Fit>
          <div className="mt-[14px] flex justify-between">
            <Fit w={142} className="-ml-[3px] text-[46px]">-0.61%</Fit>
            <Fit w={111} className="-mr-[2px] text-[46px]">-0.03</Fit>
          </div>
        </div>
        <Cell label="今开"><Fit w={102} className="-mr-[2px] text-[52px] text-[#12cf12]">4.88</Fit></Cell>
        <Cell label="最高"><Fit w={92} className="-mr-[4px] text-[52px] text-[#ee0808]">4.91</Fit></Cell>
        <Cell label="最低"><Fit w={102} className="-mr-[2px] text-[52px] text-[#12cf12]">4.86</Fit></Cell>
        <Cell label="换手" dots><Fit w={134} className="-mr-[2px] text-[50px] text-white">0.45%</Fit></Cell>
        <Cell label="总手"><Fit w={174} className="-mr-[2px] text-[52px] text-white">38.08万</Fit></Cell>
        <Cell label="金额"><Fit w={142} className="-mr-[2px] text-[52px] text-white">1.86亿</Fit></Cell>
        <Cell label="总值" dots><Fit w={134} className="-mr-[2px] text-[43px] text-white">410.1亿</Fit></Cell>
        <Cell label="流值"><Fit w={165} className="-mr-[2px] text-[51px] text-white">410.1亿</Fit></Cell>
        <Cell label="市盈" dots sup="动"><Fit w={108} className="-mr-[3px] text-[46px] text-white">10.99</Fit></Cell>
        <div className="flex items-center justify-end">
          <div className="-mr-[2px] -mt-[4px] flex h-[65px] w-[145px] items-center justify-center rounded-[7px] bg-[#333] text-[41px] leading-none text-[#e3e3e3]">更多</div>
        </div>
      </section>

      <section className="flex h-[123px] items-center border-b border-[#343434] bg-[#1c1c1c] pl-[40px] text-[46px] text-[#e3e3e3]">
        <svg width="52" height="44" viewBox="0 0 52 44">
          <path d="M7 10H13C19 9 22 1 28 1Q31 1 31 5V39Q31 43 28 43C22 43 19 33 13 32H7Q0 31 0 24V18Q0 11 7 10Z" fill="#3274c0" />
          <path d="M36 15Q41 22 36 29M43 9Q54 22 43 35" fill="none" stroke="#3274c0" strokeWidth="4" strokeLinecap="round" />
        </svg>
        <Fit w={920} className="ml-[38px]">自选分析：触发重点关注信号，立即点击查看</Fit>
        <svg className="ml-[140px]" width="36" height="36" viewBox="0 0 36 36" stroke="#adadad" strokeWidth="3.6"><path d="M1.5 1.5L34 34M34 1.5L1.5 34" /></svg>
      </section>

      <nav className="flex h-[122px] items-center border-b border-[#343434] bg-[#1c1c1c] pl-[42px] text-[51px] text-[#8e8d92]">
        <Fit w={102} className="mt-[4px]">分时</Fit>
        <Fit w={102} className="ml-[84px] mt-[4px]">五日</Fit>
        <span className="relative ml-[93px] mt-[4px] text-[#3274c0]">
          <Fit w={84}>日K</Fit>
          <span className="absolute -bottom-[9px] left-[8px] h-[7px] w-[71px] rounded-full bg-[#3274c0]" />
        </span>
        <Fit w={84} className="ml-[102px] mt-[4px]">周K</Fit>
        <Fit w={84} className="ml-[103px] mt-[4px]">月K</Fit>
        <Fit w={102} className="ml-[92px] mt-[4px]">更多</Fit>
        <Tri className="ml-[11px]" />
        <svg className="ml-[56px]" width="60" height="60" viewBox="0 0 60 60" fill="none" stroke="#8e8d92" strokeWidth="4.2">
          <path d="M24.5 2.6H35.5L37.5 11L42.5 14L51 11.5L57 20.5L51 26V34L57 39.5L51 48.5L42.5 46L37.5 49L35.5 57.4H24.5L22.5 49L17.5 46L9 48.5L3 39.5L9 34V26L3 20.5L9 11.5L17.5 14L22.5 11Z" />
          <circle cx="30" cy="30" r="9.5" />
        </svg>
      </nav>

      <div className="flex h-[72px] items-center pl-[16px] text-[44px]">
        <Chip className="h-[54px] w-[129px] pl-[12px]">均线<Tri className="ml-[5px]" /></Chip>
        <Fit w={180} className="ml-[14px]">MA5:4.91</Fit>
        <Down className="ml-[13px]" />
        <div className="flex items-center text-[#ffee4a]"><Fit w={140} className="ml-[17px]">10:5.07</Fit><Down className="ml-[13px]" /></div>
        <div className="flex items-center text-[#c50bbd]"><Fit w={138} className="ml-[15px]">20:5.17</Fit><Down className="ml-[12px]" /></div>
        <Chip className="ml-[162px] h-[54px] w-[148px] items-center pl-[14px]">
          <Fit w={101}>DK点</Fit>
          <svg className="ml-[11px] mt-[24px]" width="15" height="14" viewBox="0 0 15 14"><path d="M15 0V14H0Z" fill="#fff" /></svg>
        </Chip>
        <Chip className="ml-[39px] h-[54px] w-[155px] justify-center">前复权</Chip>
      </div>

      <PriceChart />

      <div className="flex h-[72px] items-center pl-[16px] text-[47px]">
        <Chip className="h-[54px] w-[177px] pl-[7px]">成交量<Tri className="ml-[17px]" /></Chip>
        <Fit w={128} className="ml-[4px]">38.08万</Fit><Down className="ml-[9px]" />
        <div className="flex items-center text-[#fbe91c]"><Fit w={206} className="ml-[17px]">MA1:58.93万</Fit><Down className="ml-[7px]" /></div>
        <div className="flex items-center text-[#f80ce8]"><Fit w={208} className="ml-[18px]">MA2:58.93万</Fit><Down className="ml-[8px]" /></div>
        <div className="flex items-center text-[#3fc43c]"><Fit w={212} className="ml-[19px]">MA3:64.54万</Fit><Down className="ml-[8px]" /></div>
        <div className="ml-[86px] flex h-[72px] w-[53px] shrink-0 items-center justify-center rounded-l-[14px] bg-[#3c3c3c]">
          <svg width="20" height="34" viewBox="0 0 20 34" fill="none" stroke="#fff" strokeWidth="4.5"><path d="M17 3L4 17L17 31" /></svg>
        </div>
      </div>

      <VolumeChart />

      <div className="flex h-[72px] items-center pl-[16px] text-[47px]">
        <Chip className="h-[53px] w-[127px] pl-[7px]"><Fit w={77} className="text-[44px]">KDJ</Fit><Tri className="ml-[15px]" /></Chip>
        <Fit w={129} className="ml-[3px]">K:7.89</Fit><Down className="ml-[13px]" />
        <div className="flex items-center text-[#fbe91c]"><Fit w={154} className="ml-[25px]">D:17.08</Fit><Down className="ml-[14px]" /></div>
        <div className="flex items-center text-[#f80ce8]"><Fit w={170} className="ml-[25px]">J:-10.49</Fit><Down className="ml-[15px]" /></div>
      </div>

      <KdjChart />
    </div>
  );
}

function Cell({ label, dots, sup, children }: { label: string; dots?: boolean; sup?: string; children: ReactNode }) {
  return (
    <div className="flex items-center leading-none">
      <span className="-ml-[2px] shrink-0 pt-[2px]">{label}</span>
      {sup && <span className="-mr-[24px] -mt-[46px] ml-[3px] text-[24px]">{sup}</span>}
      {dots && <span className={sup ? "-mt-[8px] ml-[28px]" : "-mt-[8px] ml-[4px]"}><Dots /></span>}
      <span className="ml-auto flex">{children}</span>
    </div>
  );
}
